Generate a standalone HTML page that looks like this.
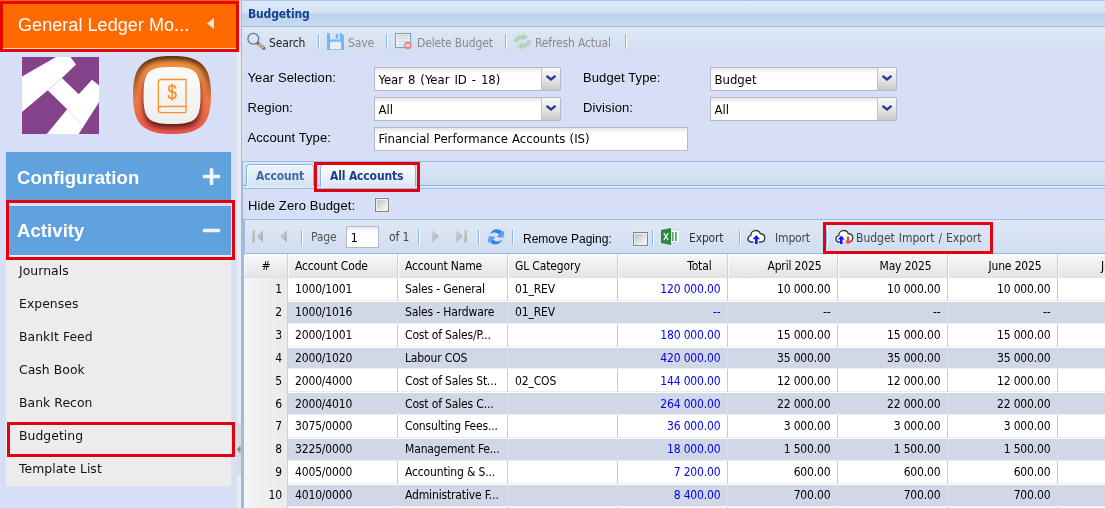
<!DOCTYPE html>
<html><head><meta charset="utf-8"><title>Budgeting</title>
<style>
*{box-sizing:border-box;margin:0;padding:0}
html,body{width:1105px;height:508px;overflow:hidden;background:#d6dff5}
body{position:relative;font-family:"DejaVu Sans Condensed","Liberation Sans",sans-serif;font-size:12px;color:#000;letter-spacing:-0.15px}
.abs{position:absolute}
.t{position:absolute;white-space:nowrap;line-height:1}
#left{left:0;top:0;width:241px;height:508px;background:#d6dff5}
#lhdr{left:0;top:1px;width:239px;height:51px;background:#ff6a00;border:3px solid #e70606}
#lhdr .wl{left:0;right:0;bottom:0;height:1px;background:#ffe3cf}
.bar{left:6px;width:225px;background:#60a2dd}
.bart{font:bold 18.5px "Liberation Sans",sans-serif;color:#fff;left:17px;letter-spacing:0.08px}
#menu{left:6px;top:255px;width:225px;height:231px;background:#ececec}
.mi{left:19px;font:12.4px "DejaVu Sans","Liberation Sans",sans-serif;color:#111;letter-spacing:0.05px}
.red{border:3px solid #e3000f}
#main,#left{will-change:transform}
#main{left:241px;top:0;width:870px;height:508px;background:#d6dff5;border-left:1px solid #99bbe8}
.lbl{font:13px "Liberation Sans",sans-serif;color:#000;letter-spacing:0.1px}
.inp{background:#fff;border:1px solid #b5b8c8;height:24px;font:13px "DejaVu Sans Condensed","Liberation Sans",sans-serif;padding:5px 0 0 3.500px;line-height:1;white-space:nowrap;letter-spacing:0;word-spacing:1.2px;background-image:linear-gradient(#e4e6e4,#fff 5px)}
.trg{width:20px;height:24px;border:1px solid #b5b8c8;border-left:1px solid #c4c6cf;border-radius:0 2px 2px 0;background:linear-gradient(#f8f8f8,#e6e6e6 50%,#c9c9cb)}
.sep{width:2px;height:15px;border-left:1px solid #8db5f2;border-right:1px solid #fff}
.gray{color:#8a8a8a}
.hc{position:absolute;top:0;height:23px;border-right:1px solid #d0d0d0;border-left:1px solid #fafafa;font-size:12px;line-height:1;padding-top:6px;white-space:nowrap}
.row{position:absolute;left:0;width:870px;height:23px;border-bottom:1px solid #ededed;border-top:1px solid #fff;background:#fff}
.row.alt{background:#d0d7e6;background-clip:padding-box}
.row.alt:before{content:"";position:absolute;left:0;top:-1px;width:870px;height:1px;background:#fff}
.row.alt:after{content:"";position:absolute;left:0;bottom:-1px;width:870px;height:1px;background:#ededed}
.c{position:absolute;top:0;height:21px;line-height:1;padding-top:4px;white-space:nowrap;font-size:12px}
.num{left:0;top:-1px;width:44px;text-align:right;padding-right:5px;padding-top:5px;background:linear-gradient(90deg,#f4f4f4,#eaeaea);border-right:1px solid #d0d0d0;height:23px;z-index:2}
.vl{position:absolute;top:-1px;bottom:-1px;width:1px;background:#cbcbcb}
.row.alt .vl{background:#dcdee4;top:0;bottom:0}
.row.d1 .c{padding-top:5px}
.row.d1 .num{padding-top:6px}
.r{text-align:right}
.bl{color:#0000f0}
.cb{width:14px;height:14px;border:1px solid #828282;background:linear-gradient(135deg,#c2c6cb 15%,#f3f3f3 80%);box-shadow:inset 0 0 0 1px #f1f1f1,0 0 0 1px rgba(225,235,252,.7)}
</style></head><body>

<div id="left" class="abs">
  <div class="abs" style="left:0;top:0;width:239px;height:2px;background:#ff6a00"></div>
  <div id="lhdr" class="abs"><div class="abs wl"></div>
    <div class="t" style="left:15px;top:11px;font:18px 'Liberation Sans',sans-serif;letter-spacing:0.06px;color:#fff">General Ledger Mo...</div>
    <svg class="abs" style="left:203px;top:13px" width="10" height="14"><path d="M8 1 L8 12 L1 6.500Z" fill="#ffe6d6"/></svg>
  </div>
  <!-- logo -->
  <svg class="abs" style="left:22px;top:57px" width="77" height="77" viewBox="0 0 77 77">
    <rect width="77" height="77" fill="#84428a"/>
    <path d="M0 19.500 L34 0 L48.400 0 L54 7.400 L39.900 20.900 L25.700 33.300 L0 54.900Z" fill="#fff"/>
    <path d="M25.700 33.300 L39.900 20.900 L56.700 37.200 L70 22.700 L77 28.300 L77 45.200 L56.700 77 L24.800 77 L45.200 52.300Z" fill="#fff"/>
    <path d="M45.200 52.300 L60.300 67.400" stroke="#d8d8d8" stroke-width=".8" fill="none"/>
    <path d="M25.700 33.300 L39.900 20.900" stroke="#dcdcdc" stroke-width=".8" fill="none"/>
  </svg>
  <!-- app icon -->
  <svg class="abs" style="left:130px;top:54px" width="84" height="84" viewBox="0 0 84 84">
    <defs>
      <linearGradient id="og2" x1="0" y1="0" x2="0" y2="1"><stop offset="0" stop-color="#f0943e"/><stop offset=".55" stop-color="#ec7a48"/><stop offset="1" stop-color="#e8554f"/></linearGradient>
      <linearGradient id="wg" x1="0" y1="0" x2="0" y2="1"><stop offset="0" stop-color="#fbfbfb"/><stop offset="1" stop-color="#eeeeee"/></linearGradient>
      <linearGradient id="fade" x1="0" y1="0" x2="0" y2="1"><stop offset="0" stop-color="#fff"/><stop offset=".3" stop-color="#fff" stop-opacity=".5"/><stop offset=".55" stop-color="#fff" stop-opacity="0"/></linearGradient>
      <mask id="mk"><rect width="84" height="84" fill="url(#fade)"/></mask>
      <clipPath id="oc"><path id="osh" d="M42 2 C71 2 81 12 81 41 C81 70 71 80 42 80 C13 80 3 70 3 41 C3 12 13 2 42 2Z"/></clipPath>
      <filter id="b1" x="-20%" y="-20%" width="140%" height="140%"><feGaussianBlur stdDeviation="2.200"/></filter>
      <filter id="b2" x="-20%" y="-20%" width="140%" height="140%"><feGaussianBlur stdDeviation="2.600"/></filter>
    </defs>
    <path d="M42 2 C71 2 81 12 81 41 C81 70 71 80 42 80 C13 80 3 70 3 41 C3 12 13 2 42 2Z" fill="url(#og2)"/>
    <g clip-path="url(#oc)">
      <path d="M42 2 C71 2 81 12 81 41 C81 70 71 80 42 80 C13 80 3 70 3 41 C3 12 13 2 42 2Z" fill="none" stroke="#4a2608" stroke-width="8" filter="url(#b1)" mask="url(#mk)"/>
      <path d="M42 18 C66 18 70.500 22.500 70.500 46 C70.500 69 66 74 42 74 C18 74 13.500 69 13.500 46 C13.500 22.500 18 18 42 18Z" fill="#5a1010" opacity=".9" filter="url(#b2)"/>
    </g>
    <path d="M42 13 C66 13 70.500 17.500 70.500 41.500 C70.500 65 66 70 42 70 C18 70 13.500 65 13.500 41.500 C13.500 17.500 18 13 42 13Z" fill="url(#wg)"/>
    <g fill="none" stroke="#f6922f" stroke-width="1.300">
      <path d="M56 58.500 V25.500 H31 Q28.300 25.500 28.300 28.500 V55.500"/>
      <path d="M56 52.500 H31.500 Q28.300 52.500 28.300 55.700 Q28.300 58.700 31.500 58.700 H56"/>
    </g>
    <text x="42" y="45.400" text-anchor="middle" transform="translate(42 0) scale(.86 1) translate(-42 0)" font-family="Liberation Sans, sans-serif" font-size="19.500" stroke="#f6922f" stroke-width=".45" fill="#f6922f">$</text>
  </svg>

  <div class="abs bar" style="top:152px;height:48px"></div>
  <div class="t bart" style="top:166.600px">Configuration</div>
  <svg class="abs" style="left:202px;top:167px" width="19" height="19"><path d="M2.500 9.500 H16.500 M9.500 2.500 V16.500" stroke="#f0f5fc" stroke-width="3.700" stroke-linecap="round"/></svg>

  <div id="menu" class="abs"></div>
  <div class="abs bar" style="top:206px;height:49px"></div>
  <div class="t bart" style="top:219.800px">Activity</div>
  <svg class="abs" style="left:202px;top:221px" width="19" height="19"><path d="M2.500 9.500 H16.500" stroke="#f0f5fc" stroke-width="3.700" stroke-linecap="round"/></svg>
  <div class="abs red" style="left:6px;top:200px;width:229px;height:59.500px;border-width:3.500px"></div>

  <div class="t mi" style="top:263px">Journals</div>
  <div class="t mi" style="top:296px">Expenses</div>
  <div class="t mi" style="top:329px">BankIt Feed</div>
  <div class="t mi" style="top:362px">Cash Book</div>
  <div class="t mi" style="top:395px">Bank Recon</div>
  <div class="t mi" style="top:428px">Budgeting</div>
  <div class="t mi" style="top:461px">Template List</div>
  <div class="abs" style="left:237px;top:52px;width:4px;height:456px;background:#ececec"></div>
  <div class="abs" style="left:237px;top:423px;width:4px;height:52px;background:#dcdcde"></div>
  <svg class="abs" style="left:236px;top:445px" width="5" height="9"><path d="M4.500 0.500 L4.500 8.500 L0.800 4.500Z" fill="#8a8a8c"/></svg>
  <div class="abs red" style="left:7px;top:422px;width:228px;height:35px"></div>
</div>

<div id="main" class="abs">
  <!-- header -->
  <div class="abs" style="left:0;top:0;width:870px;height:27px;background:linear-gradient(#dde9f7 0,#d3e2f4 12px,#bbd1ed 13px,#c9dbf1 25px);border-top:1px solid #a8c6ec;border-bottom:1px solid #99bbe8"></div>
  <div class="t" style="left:6px;top:8px;font-weight:bold;font-size:12px;color:#15428b">Budgeting</div>
  <!-- toolbar -->
  <div class="abs" style="left:0;top:27px;width:870px;height:29px;background:linear-gradient(#dfe8f4,#d3dff0 80%,#d5dff2)"></div>
  <!-- search icon -->
  <svg class="abs" style="left:5px;top:32px" width="19" height="19" viewBox="0 0 19 19">
    <path d="M10.400 11 L16.800 16.200" stroke="#5c6f97" stroke-width="3.400" stroke-linecap="round"/>
    <path d="M11.600 12 L16.400 15.900" stroke="#ebb063" stroke-width="2.300" stroke-linecap="butt"/>
    <circle cx="6.300" cy="6.800" r="5.400" fill="#dfe4ee" stroke="#5f739b" stroke-width="1.250"/>
  </svg>
  <div class="t" style="left:27px;top:37px;color:#222">Search</div>
  <div class="abs sep" style="left:76px;top:34px"></div>
  <!-- save icon -->
  <svg class="abs" style="left:85px;top:33px" width="17" height="17" viewBox="0 0 17 17">
    <path d="M0 0 H14 L17 3 V17 H0Z" fill="#6db9f7"/>
    <rect x="3" y="0" width="10" height="6.500" fill="#dbe6f5"/>
    <rect x="8.700" y="1" width="2.600" height="4.300" fill="#6db9f7"/>
    <rect x="3" y="9" width="11" height="7.300" fill="#e9eef8"/>
    <rect x="3" y="7.700" width="11" height="1.300" fill="#8cc6f6"/>
  </svg>
  <div class="t gray" style="left:106px;top:37px">Save</div>
  <div class="abs sep" style="left:144px;top:34px"></div>
  <!-- delete icon -->
  <svg class="abs" style="left:153px;top:33px" width="18" height="17" viewBox="0 0 18 17">
    <rect x=".5" y=".5" width="15" height="14" fill="#f4f8fd" stroke="#6ba6d2" stroke-width="1.200"/>
    <rect x="2" y="2" width="12" height="1.600" fill="#f3d58a"/>
    <g stroke="#c4d8ee" stroke-width="1"><path d="M2 5.500 H14 M2 8.500 H14 M2 11.500 H14 M5 2 V14 M8 2 V14 M11 2 V14"/></g>
    <circle cx="12.800" cy="12.300" r="3.900" fill="#e88e84"/>
    <rect x="10.500" y="11.500" width="4.600" height="1.700" fill="#fbeceb"/>
  </svg>
  <div class="t gray" style="left:175px;top:37px">Delete Budget</div>
  <div class="abs sep" style="left:263px;top:34px"></div>
  <!-- refresh actual icon -->
  <svg class="abs" style="left:271px;top:33px" width="19" height="17" viewBox="0 0 19 17">
    <g fill="none" stroke="#b0d6b6" stroke-width="3.800" stroke-linecap="butt">
      <path d="M2.900 9.300 C2.900 5 6 4 10.500 4"/>
      <path d="M16.100 7.300 C16.100 11.800 13 13 9 13"/>
    </g>
    <path d="M10 0.300 L15.300 3.800 L10 7.600Z" fill="#b0d6b6"/>
    <path d="M9.500 9.300 L4.300 13.200 L9.500 16.700Z" fill="#b0d6b6"/>
  </svg>
  <div class="t gray" style="left:293px;top:37px">Refresh Actual</div>
  <div class="abs sep" style="left:383px;top:34px"></div>

  <!-- form -->
  <div class="t lbl" style="left:5.500px;top:70px">Year Selection:</div>
  <div class="abs inp" style="left:132px;top:67px;width:168px">Year 8 (Year ID - 18)</div>
  <div class="abs trg" style="left:299px;top:67px"></div>
  <div class="t lbl" style="left:341px;top:70px">Budget Type:</div>
  <div class="abs inp" style="left:468px;top:67px;width:168px">Budget</div>
  <div class="abs trg" style="left:635px;top:67px"></div>

  <div class="t lbl" style="left:5.500px;top:100px">Region:</div>
  <div class="abs inp" style="left:132px;top:97px;width:168px">All</div>
  <div class="abs trg" style="left:299px;top:97px"></div>
  <div class="t lbl" style="left:341px;top:100px">Division:</div>
  <div class="abs inp" style="left:468px;top:97px;width:168px">All</div>
  <div class="abs trg" style="left:635px;top:97px"></div>
  <svg class="abs" style="left:303px;top:74px" width="12" height="8"><path d="M1.500 1.800 L6 5.500 L10.500 1.800" fill="none" stroke="#1d3f8d" stroke-width="2.300"/></svg>
  <svg class="abs" style="left:303px;top:104px" width="12" height="8"><path d="M1.500 1.800 L6 5.500 L10.500 1.800" fill="none" stroke="#1d3f8d" stroke-width="2.300"/></svg>
  <svg class="abs" style="left:639px;top:74px" width="12" height="8"><path d="M1.500 1.800 L6 5.500 L10.500 1.800" fill="none" stroke="#1d3f8d" stroke-width="2.300"/></svg>
  <svg class="abs" style="left:639px;top:104px" width="12" height="8"><path d="M1.500 1.800 L6 5.500 L10.500 1.800" fill="none" stroke="#1d3f8d" stroke-width="2.300"/></svg>

  <div class="t lbl" style="left:5.500px;top:130px">Account Type:</div>
  <div class="abs inp" style="left:132px;top:126.500px;width:314px;height:24px;padding-top:4px;word-spacing:0.5px">Financial Performance Accounts (IS)</div>

  <!-- tabs -->
  <div class="abs" style="left:0;top:161px;width:870px;height:25px;background:linear-gradient(#dae6f6,#cbdcf1);border-top:1px solid #99bbe8;border-bottom:1px solid #8db2e3"></div>
  <div class="abs" style="left:0;top:186px;width:870px;height:3px;background:#dde8f7;border-bottom:1px solid #99bbe8"></div>
  <div class="abs" style="left:4px;top:164px;width:68px;height:22px;border:1px solid #8db2e3;border-bottom:0;border-radius:4px 4px 0 0;background:linear-gradient(#eef4fc,#d4e2f4);box-shadow:inset 1px 1px 0 #f6f9fd"></div>
  <div class="t" style="left:14px;top:169.500px;font-weight:bold;font-size:12px;color:#416aa3">Account</div>
  <div class="abs" style="left:77.500px;top:164px;width:96px;height:23px;border:1px solid #8db2e3;border-bottom:0;border-radius:4px 4px 0 0;background:linear-gradient(#fff,#dbe6f6);box-shadow:inset 1px 1px 0 #fff"></div>
  <div class="t" style="left:88px;top:169.500px;font-weight:bold;font-size:12px;color:#15428b">All Accounts</div>
  <div class="abs red" style="left:72.300px;top:162.300px;width:105.500px;height:29.500px"></div>

  <div class="t lbl" style="left:6px;top:198px">Hide Zero Budget:</div>
  <div class="abs cb" style="left:133px;top:198px"></div>

  <!-- paging toolbar -->
  <div class="abs" style="left:2px;top:219px;width:868px;height:35px;background:linear-gradient(#dfe8f5,#d0ddf0);border-top:1px solid #99bbe8;border-left:1px solid #99bbe8;border-bottom:1px solid #99bbe8"></div>
  <svg class="abs" style="left:10px;top:230px" width="12" height="13"><defs><linearGradient id="gg" x1="0" y1="0" x2="1" y2="1"><stop offset="0" stop-color="#cfd3d8"/><stop offset="1" stop-color="#a9adb3"/></linearGradient></defs><rect x="0" y="0" width="3" height="12.500" fill="url(#gg)"/><path d="M4.500 6.200 L11 0 V12.400Z" fill="url(#gg)"/></svg>
  <svg class="abs" style="left:38px;top:230px" width="8" height="13"><path d="M0 6.200 L7 0 V12.400Z" fill="url(#gg)"/></svg>
  <div class="abs sep" style="left:59px;top:230px"></div>
  <div class="t" style="left:69px;top:231px;color:#555">Page</div>
  <div class="abs inp" style="left:104px;top:226px;width:33px;height:22px;padding-top:4px">1</div>
  <div class="t" style="left:147px;top:231px;color:#444">of 1</div>
  <div class="abs sep" style="left:176px;top:230px"></div>
  <svg class="abs" style="left:190px;top:230px" width="8" height="13"><path d="M7 6.200 L0 0 V12.400Z" fill="url(#gg)"/></svg>
  <svg class="abs" style="left:214px;top:230px" width="12" height="13"><path d="M6.700 6.200 L0 0 V12.400Z" fill="url(#gg)"/><rect x="8" y="0" width="3" height="12.500" fill="url(#gg)"/></svg>
  <div class="abs sep" style="left:236px;top:230px"></div>
  <!-- refresh blue -->
  <svg class="abs" style="left:246px;top:228px" width="18" height="18" viewBox="0 0 18 18">
    <defs><linearGradient id="rb" x1="0" y1="0" x2="1" y2="1"><stop offset="0" stop-color="#2a80e6"/><stop offset=".55" stop-color="#4a9af0"/><stop offset="1" stop-color="#9ccdfa"/></linearGradient>
    <linearGradient id="rb2" x1="1" y1="1" x2="0" y2="0"><stop offset="0" stop-color="#2a80e6"/><stop offset=".55" stop-color="#4a9af0"/><stop offset="1" stop-color="#9ccdfa"/></linearGradient></defs>
    <g id="rarr">
      <path d="M1.900 6.200 C3.500 1.500 10 -0.800 14.300 3.800 L11.300 6.800 C9 3.800 5 3.600 1.900 6.200Z" fill="#2f86e8"/>
      <path d="M16.300 2.600 L15.900 10 L8.600 8.900Z" fill="url(#rb)"/>
    </g>
    <g transform="rotate(180 8.100 8.900)">
      <path d="M1.900 6.200 C3.500 1.500 10 -0.800 14.300 3.800 L11.300 6.800 C9 3.800 5 3.600 1.900 6.200Z" fill="#2f86e8"/>
      <path d="M16.300 2.600 L15.900 10 L8.600 8.900Z" fill="url(#rb)"/>
    </g>
  </svg>
  <div class="abs sep" style="left:270px;top:230px"></div>
  <div class="t lbl" style="left:281px;top:232px;font-size:12px;letter-spacing:0">Remove Paging:</div>
  <div class="abs cb" style="left:391px;top:232px;width:15px"></div>
  <div class="abs sep" style="left:410px;top:230px"></div>
  <!-- excel -->
  <svg class="abs" style="left:419px;top:228px" width="18" height="17" viewBox="0 0 18 17">
    <rect x="9" y="3" width="8.500" height="11" fill="#fff"/>
    <g fill="#5aa667"><rect x="10.800" y="4" width="1.800" height="9"/><rect x="14" y="4" width="1.800" height="9"/></g>
    <path d="M0 2 L10 0 V17 L0 15Z" fill="#2c8a3f"/>
    <path d="M2.800 5.200 L7.200 11.800 M7.200 5.200 L2.800 11.800" stroke="#fff" stroke-width="1.200"/>
  </svg>
  <div class="t" style="left:447px;top:232px;color:#333">Export</div>
  <div class="abs sep" style="left:497px;top:230px"></div>
  <!-- cloud import -->
  <svg class="abs" style="left:505px;top:229px" width="19" height="16" viewBox="0 0 19 16">
    <path d="M6 13 H4.500 C2.300 13 1 11.500 1 9.700 C1 8 2.200 6.800 3.800 6.600 C3.800 3.500 6 1.500 8.700 1.500 C11 1.500 12.700 2.800 13.300 4.700 C16 4.700 17.700 6.500 17.700 8.800 C17.700 11.200 16 13 13.700 13 H12.500" fill="#fff" stroke="#3a3a3a" stroke-width="1.350" stroke-linecap="round"/>
    <path d="M9.300 6 L13 10.200 H10.600 V15 H8 V10.200 H5.600Z" fill="#0a1cff"/>
  </svg>
  <div class="t" style="left:533px;top:232px;color:#444">Import</div>
  <div class="abs sep" style="left:584px;top:230px"></div>
  <svg class="abs" style="left:593px;top:229px" width="19" height="16" viewBox="0 0 19 16">
    <path d="M4.500 13 C2.300 13 1 11.500 1 9.700 C1 8 2.200 6.800 3.800 6.600 C3.800 3.500 6 1.500 8.700 1.500 C11 1.500 12.700 2.800 13.300 4.700 C16 4.700 17.700 6.500 17.700 8.800 C17.700 11.200 16 13 14.700 13" fill="#fff" stroke="#3a3a3a" stroke-width="1.350" stroke-linecap="round"/>
    <path d="M6.300 6.500 L9.800 10.500 H7.600 V15 H5 V10.500 H2.800Z" fill="#0a1cff"/>
    <path d="M13 15.500 L9.700 11.500 H11.800 V7.500 H14.200 V11.500 H16.300Z" fill="#ee4a5e"/>
  </svg>
  <div class="t" style="left:614px;top:232px;color:#444;letter-spacing:0;word-spacing:0.5px">Budget Import / Export</div>
  <div class="abs red" style="left:581px;top:222px;width:170px;height:32px"></div>

  <div class="abs" style="left:0;top:161px;width:1px;height:347px;background:#99bbe8"></div>
  <div class="abs" style="left:1px;top:219px;width:1px;height:289px;background:#99bbe8"></div>
  <!-- grid -->
  <div id="grid" class="abs" style="left:2px;top:254px;width:868px;height:254px;background:#fff;overflow:hidden">
    <div class="abs" style="left:0;top:0;width:868px;height:24px;background:linear-gradient(#f9f9f9,#e3e4e6);border-bottom:1px solid #e0e0e2">
      <div class="hc" style="left:0;width:44px;text-align:center">#</div>
      <div class="hc" style="left:44px;width:110px;padding-left:6px">Account Code</div>
      <div class="hc" style="left:154px;width:110px;padding-left:6px">Account Name</div>
      <div class="hc" style="left:264px;width:110px;padding-left:6px">GL Category</div>
      <div class="hc r" style="left:374px;width:110px;padding-right:15.500px">Total</div>
      <div class="hc r" style="left:484px;width:110px;padding-right:15.500px">April 2025</div>
      <div class="hc r" style="left:594px;width:110px;padding-right:15.500px">May 2025</div>
      <div class="hc r" style="left:704px;width:110px;padding-right:15.500px">June 2025</div>
      <div class="hc r" style="left:814px;width:110px;padding-right:17px">July 2025</div>
    </div>
    <div class="row" style="top:24px;height:23px"><div class="c num">1</div><div class="c" style="left:51px">1000/1001</div><div class="c" style="left:161px">Sales - General</div><div class="c" style="left:271px">01_REV</div><div class="c r bl" style="left:375px;width:101.500px">120 000.00</div><div class="c r" style="left:485px;width:101.500px">10 000.00</div><div class="c r" style="left:595px;width:101.500px">10 000.00</div><div class="c r" style="left:705px;width:101.500px">10 000.00</div><i class="vl" style="left:153px"></i><i class="vl" style="left:263px"></i><i class="vl" style="left:373px"></i><i class="vl" style="left:483px"></i><i class="vl" style="left:593px"></i><i class="vl" style="left:703px"></i><i class="vl" style="left:813px"></i></div>
    <div class="row alt" style="top:47px;height:23px"><div class="c num">2</div><div class="c" style="left:51px">1000/1016</div><div class="c" style="left:161px">Sales - Hardware</div><div class="c" style="left:271px">01_REV</div><div class="c r bl" style="left:375px;width:101.500px">--</div><div class="c r" style="left:485px;width:101.500px">--</div><div class="c r" style="left:595px;width:101.500px">--</div><div class="c r" style="left:705px;width:101.500px">--</div><i class="vl" style="left:153px"></i><i class="vl" style="left:263px"></i><i class="vl" style="left:373px"></i><i class="vl" style="left:483px"></i><i class="vl" style="left:593px"></i><i class="vl" style="left:703px"></i><i class="vl" style="left:813px"></i></div>
    <div class="row" style="top:70px;height:23px"><div class="c num">3</div><div class="c" style="left:51px">2000/1001</div><div class="c" style="left:161px">Cost of Sales/P...</div><div class="c r bl" style="left:375px;width:101.500px">180 000.00</div><div class="c r" style="left:485px;width:101.500px">15 000.00</div><div class="c r" style="left:595px;width:101.500px">15 000.00</div><div class="c r" style="left:705px;width:101.500px">15 000.00</div><i class="vl" style="left:153px"></i><i class="vl" style="left:263px"></i><i class="vl" style="left:373px"></i><i class="vl" style="left:483px"></i><i class="vl" style="left:593px"></i><i class="vl" style="left:703px"></i><i class="vl" style="left:813px"></i></div>
    <div class="row alt" style="top:93px;height:22px"><div class="c num">4</div><div class="c" style="left:51px">2000/1020</div><div class="c" style="left:161px">Labour COS</div><div class="c r bl" style="left:375px;width:101.500px">420 000.00</div><div class="c r" style="left:485px;width:101.500px">35 000.00</div><div class="c r" style="left:595px;width:101.500px">35 000.00</div><div class="c r" style="left:705px;width:101.500px">35 000.00</div><i class="vl" style="left:153px"></i><i class="vl" style="left:263px"></i><i class="vl" style="left:373px"></i><i class="vl" style="left:483px"></i><i class="vl" style="left:593px"></i><i class="vl" style="left:703px"></i><i class="vl" style="left:813px"></i></div>
    <div class="row d1" style="top:115px;height:23px"><div class="c num">5</div><div class="c" style="left:51px">2000/4000</div><div class="c" style="left:161px">Cost of Sales St...</div><div class="c" style="left:271px">02_COS</div><div class="c r bl" style="left:375px;width:101.500px">144 000.00</div><div class="c r" style="left:485px;width:101.500px">12 000.00</div><div class="c r" style="left:595px;width:101.500px">12 000.00</div><div class="c r" style="left:705px;width:101.500px">12 000.00</div><i class="vl" style="left:153px"></i><i class="vl" style="left:263px"></i><i class="vl" style="left:373px"></i><i class="vl" style="left:483px"></i><i class="vl" style="left:593px"></i><i class="vl" style="left:703px"></i><i class="vl" style="left:813px"></i></div>
    <div class="row alt d1" style="top:138px;height:23px"><div class="c num">6</div><div class="c" style="left:51px">2000/4010</div><div class="c" style="left:161px">Cost of Sales C...</div><div class="c r bl" style="left:375px;width:101.500px">264 000.00</div><div class="c r" style="left:485px;width:101.500px">22 000.00</div><div class="c r" style="left:595px;width:101.500px">22 000.00</div><div class="c r" style="left:705px;width:101.500px">22 000.00</div><i class="vl" style="left:153px"></i><i class="vl" style="left:263px"></i><i class="vl" style="left:373px"></i><i class="vl" style="left:483px"></i><i class="vl" style="left:593px"></i><i class="vl" style="left:703px"></i><i class="vl" style="left:813px"></i></div>
    <div class="row" style="top:161px;height:23px"><div class="c num">7</div><div class="c" style="left:51px">3075/0000</div><div class="c" style="left:161px">Consulting Fees...</div><div class="c r bl" style="left:375px;width:101.500px">36 000.00</div><div class="c r" style="left:485px;width:101.500px">3 000.00</div><div class="c r" style="left:595px;width:101.500px">3 000.00</div><div class="c r" style="left:705px;width:101.500px">3 000.00</div><i class="vl" style="left:153px"></i><i class="vl" style="left:263px"></i><i class="vl" style="left:373px"></i><i class="vl" style="left:483px"></i><i class="vl" style="left:593px"></i><i class="vl" style="left:703px"></i><i class="vl" style="left:813px"></i></div>
    <div class="row alt" style="top:184px;height:23px"><div class="c num">8</div><div class="c" style="left:51px">3225/0000</div><div class="c" style="left:161px">Management Fe...</div><div class="c r bl" style="left:375px;width:101.500px">18 000.00</div><div class="c r" style="left:485px;width:101.500px">1 500.00</div><div class="c r" style="left:595px;width:101.500px">1 500.00</div><div class="c r" style="left:705px;width:101.500px">1 500.00</div><i class="vl" style="left:153px"></i><i class="vl" style="left:263px"></i><i class="vl" style="left:373px"></i><i class="vl" style="left:483px"></i><i class="vl" style="left:593px"></i><i class="vl" style="left:703px"></i><i class="vl" style="left:813px"></i></div>
    <div class="row" style="top:207px;height:23px"><div class="c num">9</div><div class="c" style="left:51px">4005/0000</div><div class="c" style="left:161px">Accounting &amp; S...</div><div class="c r bl" style="left:375px;width:101.500px">7 200.00</div><div class="c r" style="left:485px;width:101.500px">600.00</div><div class="c r" style="left:595px;width:101.500px">600.00</div><div class="c r" style="left:705px;width:101.500px">600.00</div><i class="vl" style="left:153px"></i><i class="vl" style="left:263px"></i><i class="vl" style="left:373px"></i><i class="vl" style="left:483px"></i><i class="vl" style="left:593px"></i><i class="vl" style="left:703px"></i><i class="vl" style="left:813px"></i></div>
    <div class="row alt" style="top:230px;height:23px"><div class="c num">10</div><div class="c" style="left:51px">4010/0000</div><div class="c" style="left:161px">Administrative F...</div><div class="c r bl" style="left:375px;width:101.500px">8 400.00</div><div class="c r" style="left:485px;width:101.500px">700.00</div><div class="c r" style="left:595px;width:101.500px">700.00</div><div class="c r" style="left:705px;width:101.500px">700.00</div><i class="vl" style="left:153px"></i><i class="vl" style="left:263px"></i><i class="vl" style="left:373px"></i><i class="vl" style="left:483px"></i><i class="vl" style="left:593px"></i><i class="vl" style="left:703px"></i><i class="vl" style="left:813px"></i></div>
    <div class="row" style="top:253px;height:23px"><div class="c num"></div><div class="c" style="left:51px"></div><div class="c" style="left:161px"></div><div class="c r bl" style="left:375px;width:101.500px"></div><div class="c r" style="left:485px;width:101.500px"></div><div class="c r" style="left:595px;width:101.500px"></div><div class="c r" style="left:705px;width:101.500px"></div><i class="vl" style="left:153px"></i><i class="vl" style="left:263px"></i><i class="vl" style="left:373px"></i><i class="vl" style="left:483px"></i><i class="vl" style="left:593px"></i><i class="vl" style="left:703px"></i><i class="vl" style="left:813px"></i></div>
  </div>
</div>
</body></html>
